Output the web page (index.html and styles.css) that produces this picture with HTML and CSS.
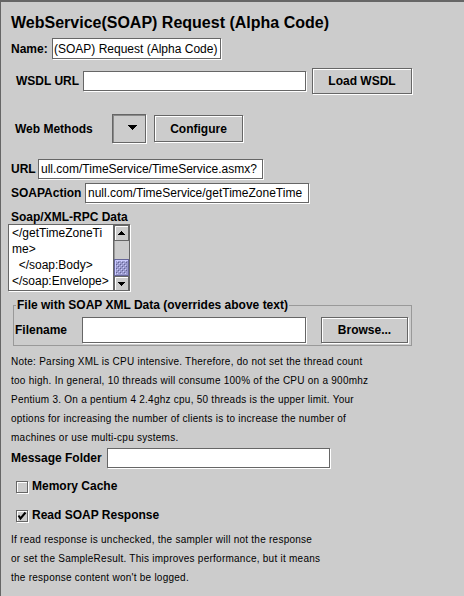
FILE: index.html
```html
<!DOCTYPE html>
<html>
<head>
<meta charset="utf-8">
<title>WebService(SOAP) Request</title>
<link rel="stylesheet" href="styles.css">
</head>
<body>
<div class="panel">
  <h1 class="title">WebService(SOAP) Request (Alpha Code)</h1>

  <div class="row row-name">
    <span class="label l-name">Name:</span>
    <div class="field f-name">(SOAP) Request (Alpha Code)</div>
  </div>

  <div class="row row-wsdl">
    <span class="label l-wsdl">WSDL URL</span>
    <div class="field f-wsdl"></div>
    <button class="btn b-load">Load WSDL</button>
  </div>

  <div class="row row-methods">
    <span class="label l-methods">Web Methods</span>
    <div class="combo">
      <svg width="9" height="5" viewBox="0 0 9 5" fill="#000"><rect x="0" y="0" width="9" height="1"/><rect x="1" y="1" width="7" height="1"/><rect x="2" y="2" width="5" height="1"/><rect x="3" y="3" width="3" height="1"/><rect x="4" y="4" width="1" height="1"/></svg>
    </div>
    <button class="btn b-config">Configure</button>
  </div>

  <div class="row row-url">
    <span class="label l-url">URL</span>
    <div class="field f-url">ull.com/TimeService/TimeService.asmx?</div>
  </div>

  <div class="row row-soap">
    <span class="label l-soap">SOAPAction</span>
    <div class="field f-soap">null.com/TimeService/getTimeZoneTime</div>
  </div>

  <div class="label data-label">Soap/XML-RPC Data</div>
  <div class="textarea">
    <div class="ta-text"><div>&lt;/getTimeZoneTi</div><div>me&gt;</div><div>  &lt;/soap:Body&gt;</div><div>&lt;/soap:Envelope&gt;</div></div>
    <svg class="sb" width="16" height="65" viewBox="0 0 16 65">
      <defs>
        <pattern id="bumps" width="4" height="4" patternUnits="userSpaceOnUse">
          <rect x="0" y="0" width="1" height="1" fill="#ccccff"/>
          <rect x="2" y="2" width="1" height="1" fill="#ccccff"/>
          <rect x="1" y="1" width="1" height="1" fill="#666699"/>
          <rect x="3" y="3" width="1" height="1" fill="#666699"/>
        </pattern>
      </defs>
      <rect x="0" y="0" width="16" height="65" fill="#cccccc"/>
      <rect x="0" y="0" width="1" height="65" fill="#666666"/>
      <rect x="1" y="16" width="1" height="18" fill="#999999"/>
      <rect x="1.5" y="0.5" width="14" height="15" fill="#cccccc" stroke="#666666"/>
      <path d="M2.5 15 V1.5 H15" stroke="#ffffff" fill="none"/>
      <g fill="#000">
        <rect x="8" y="6" width="1" height="1"/><rect x="7" y="7" width="3" height="1"/><rect x="6" y="8" width="5" height="1"/><rect x="5" y="9" width="7" height="1"/>
      </g>
      <rect x="1.5" y="34.5" width="14" height="16" fill="#9999cc" stroke="#666699"/>
      <path d="M2.5 50 V35.5 H15" stroke="#ccccff" fill="none"/>
      <rect x="3" y="36" width="11" height="13" fill="url(#bumps)"/>
      <rect x="1.5" y="51.5" width="14" height="14" fill="#cccccc" stroke="#666666"/>
      <path d="M2.5 65 V52.5 H15" stroke="#ffffff" fill="none"/>
      <g fill="#000">
        <rect x="5" y="57" width="7" height="1"/><rect x="6" y="58" width="5" height="1"/><rect x="7" y="59" width="3" height="1"/><rect x="8" y="60" width="1" height="1"/>
      </g>
    </svg>
  </div>

  <fieldset class="filebox">
    <legend>File with SOAP XML Data (overrides above text)</legend>
    <div class="row row-file">
      <span class="label l-file">Filename</span>
      <div class="field f-file"></div>
      <button class="btn b-browse">Browse...</button>
    </div>
  </fieldset>

  <p class="note note1">Note: Parsing XML is CPU intensive. Therefore, do not set the thread count<br>too high. In general, 10 threads will consume 100% of the CPU on a 900mhz<br>Pentium 3. On a pentium 4 2.4ghz cpu, 50 threads is the upper limit. Your<br>options for increasing the number of clients is to increase the number of<br>machines or use multi-cpu systems.</p>

  <div class="row row-folder">
    <span class="label l-folder">Message Folder</span>
    <div class="field f-folder"></div>
  </div>

  <div class="check c-memory">
    <span class="box"></span>
    <span class="label">Memory Cache</span>
  </div>

  <div class="check c-read">
    <span class="box"><svg width="12" height="12" viewBox="0 0 12 12"><path d="M2.5 5.5 L4.5 8.5 L9.5 2.5" stroke="#000" stroke-width="2" fill="none"/></svg></span>
    <span class="label">Read SOAP Response</span>
  </div>

  <p class="note note2">If read response is unchecked, the sampler will not the response<br>or set the SampleResult. This improves performance, but it means<br>the response content won't be logged.</p>
</div>
</body>
</html>
```
FILE: styles.css
```css
html, body {
  margin: 0;
  padding: 0;
  background: #cccccc;
}

body {
  font-family: "Liberation Sans", Arial, sans-serif;
  color: #000;
}

.panel {
  box-sizing: border-box;
  height: 596px;
  overflow: hidden;
  border-top: 2px solid #666666;
  border-left: 1px solid #666666;
  padding-left: 10px;
}

.title {
  margin: 12px 0 0;
  font-size: 16px;
  line-height: 18px;
  font-weight: bold;
}

.row {
  display: flex;
  align-items: center;
}

.label {
  flex: none;
  font-size: 12px;
  line-height: 14px;
  font-weight: bold;
  white-space: nowrap;
}

.field {
  flex: none;
  box-sizing: border-box;
  height: 20px;
  background: #ffffff;
  border: 1px solid #666666;
  box-shadow: 1px 1px 0 #ffffff;
  font-size: 12px;
  line-height: 18px;
  padding: 0 1px;
  white-space: nowrap;
  overflow: hidden;
  display: flex;
  align-items: center;
}

.btn {
  flex: none;
  box-sizing: border-box;
  margin: 0;
  padding: 0;
  background: #cccccc;
  border: 1px solid #666666;
  box-shadow: inset 1px 1px 0 #ffffff, 1px 1px 0 #ffffff;
  font-family: "Liberation Sans", Arial, sans-serif;
  font-size: 12px;
  font-weight: bold;
  color: #000;
  border-radius: 0;
}

/* Name */
.row-name { margin-top: 6px; height: 21px; }
.l-name { width: 41px; }
.f-name { width: 169px; height: 21px; }

/* WSDL */
.row-wsdl { margin-top: 9px; height: 26px; }
.l-wsdl { margin-left: 5px; width: 67px; }
.f-wsdl { width: 223px; }
.b-load { margin-left: 6px; width: 100px; height: 26px; }

/* Web methods */
.row-methods { margin-top: 20px; height: 29px; }
.l-methods { margin-left: 4px; width: 97px; }
.combo {
  flex: none;
  box-sizing: border-box;
  width: 34px;
  height: 29px;
  border: 1px solid #666666;
  box-shadow: inset 1px 1px 0 #8a8a8a, 1px 1px 0 #ffffff;
  background: #cccccc;
  display: flex;
  align-items: flex-start;
  padding: 10px 0 0 15px;
}
.combo svg { display: block; }
.b-config { margin-left: 8px; width: 89px; height: 27px; }

/* URL / SOAPAction */
.row-url { margin-top: 16px; height: 20px; }
.l-url { width: 27px; }
.f-url { width: 225px; padding-left: 2px; }

.row-soap { margin-top: 4px; height: 20px; }
.l-soap { width: 74px; }
.f-soap { width: 224px; padding-left: 2px; }

/* Text area */
.data-label { margin-top: 7px; }

.textarea {
  box-sizing: border-box;
  margin-left: -3px;
  width: 122px;
  height: 67px;
  border: 1px solid #666666;
  box-shadow: 1px 1px 0 #ffffff;
  background: #ffffff;
  display: flex;
}

.ta-text {
  flex: 1;
  min-width: 0;
  padding-left: 3px;
  font-size: 12px;
  line-height: 16px;
  white-space: pre;
  overflow: hidden;
}

.sb { display: block; flex: none; }

/* File box */
.filebox {
  box-sizing: border-box;
  margin: 7px 0 0 2px;
  width: 399px;
  min-width: 0;
  border: 1px solid #999999;
  padding: 5px 0 2px 0;
}

.filebox legend {
  margin-left: 2px;
  padding: 0 1px;
  font-size: 12px;
  line-height: 14px;
  font-weight: bold;
}

.row-file { height: 26px; }
.l-file { margin-left: 1px; width: 67px; }
.f-file { width: 224px; height: 26px; }
.b-browse { margin-left: 15px; width: 87px; height: 26px; }

/* Notes */
.note {
  margin: 0;
  font-size: 10px;
  line-height: 19px;
  letter-spacing: 0.25px;
  white-space: nowrap;
}
.note1 { margin-top: 6px; }
.note2 { margin-top: 8px; }

/* Message folder */
.row-folder { margin-top: 1px; height: 20px; }
.l-folder { width: 96px; }
.f-folder { width: 223px; }

/* Checkboxes */
.check {
  display: flex;
  align-items: center;
  height: 13px;
  margin-left: 5px;
}
.check .label { line-height: 13px; }
.c-memory { margin-top: 12px; }
.c-read { margin-top: 16px; }

.box {
  flex: none;
  box-sizing: border-box;
  width: 12px;
  height: 12px;
  border: 1px solid #666666;
  box-shadow: inset 1px 1px 0 #ffffff, 1px 1px 0 #ffffff;
  background: #cccccc;
  margin-right: 4px;
  position: relative;
}
.box svg {
  display: block;
  position: absolute;
  left: -1px;
  top: -1px;
}
```
